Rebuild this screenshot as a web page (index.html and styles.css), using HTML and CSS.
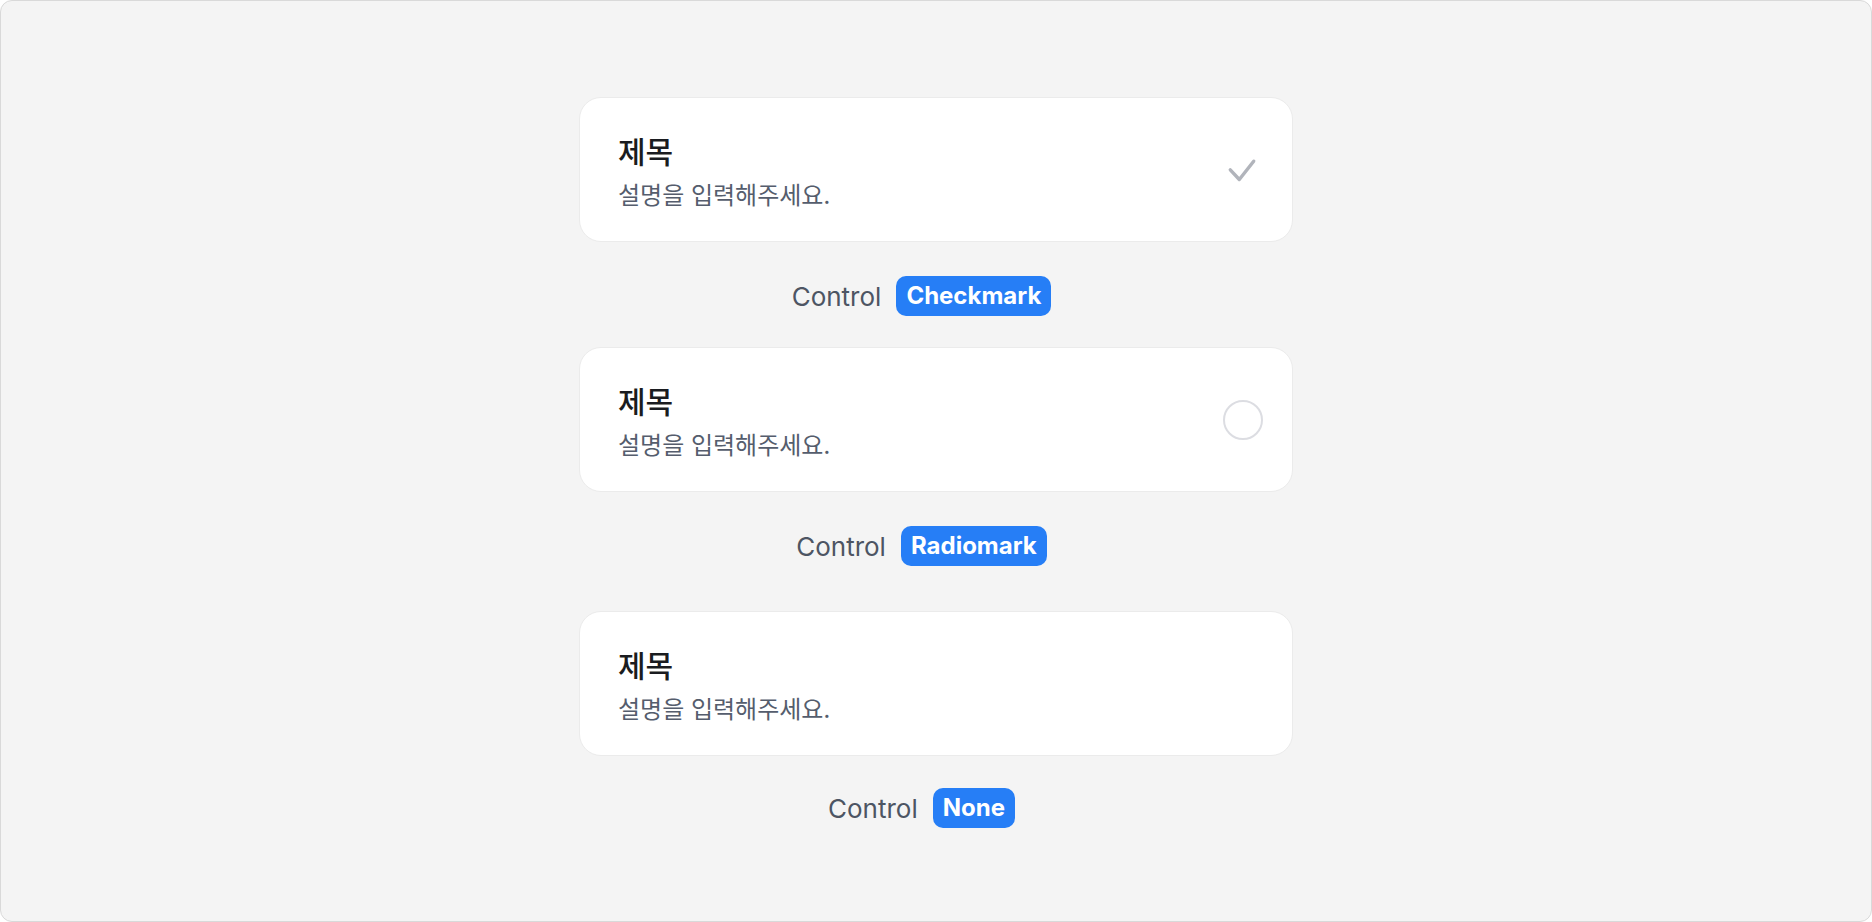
FILE: index.html
```html
<!DOCTYPE html>
<html lang="ko">
<head>
<meta charset="utf-8">
<title>List item controls</title>
<link rel="stylesheet" href="styles.css">
</head>
<body>
<div class="frame">
  <div class="stories">
    <section class="story">
      <div class="card">
        <div class="card-text">
          <div class="card-title">제목</div>
          <div class="card-desc">설명을 입력해주세요.</div>
        </div>
        <div class="control">
          <svg class="check" width="40" height="40" viewBox="0 0 40 40" aria-hidden="true">
            <path d="M7.3 19.8 L16.3 29.5 L30.7 11.2" fill="none" stroke="#b1b4bb" stroke-width="3.4" stroke-linecap="round" stroke-linejoin="round"/>
          </svg>
        </div>
      </div>
      <div class="label-row">
        <span class="label-text">Control</span>
        <span class="badge">Checkmark</span>
      </div>
    </section>

    <section class="story">
      <div class="card">
        <div class="card-text">
          <div class="card-title">제목</div>
          <div class="card-desc">설명을 입력해주세요.</div>
        </div>
        <div class="control">
          <span class="radio"></span>
        </div>
      </div>
      <div class="label-row">
        <span class="label-text">Control</span>
        <span class="badge">Radiomark</span>
      </div>
    </section>

    <section class="story story--spaced">
      <div class="card">
        <div class="card-text">
          <div class="card-title">제목</div>
          <div class="card-desc">설명을 입력해주세요.</div>
        </div>
      </div>
      <div class="label-row">
        <span class="label-text">Control</span>
        <span class="badge">None</span>
      </div>
    </section>
  </div>
</div>
</body>
</html>
```

FILE: styles.css
```css
* {
  box-sizing: border-box;
}

html, body {
  margin: 0;
  padding: 0;
  height: 100%;
}

body {
  font-family: Inter, "Noto Sans CJK KR", "Noto Sans", sans-serif;
  background: #ffffff;
}

.frame {
  width: 1872px;
  height: 922px;
  padding-top: 3px;
  background: #f4f4f4;
  border: 1px solid #d9d9d9;
  border-radius: 12px;
  display: flex;
  align-items: center;
  justify-content: center;
}

.stories {
  display: flex;
  flex-direction: column;
  align-items: center;
  gap: 31px;
}

.story {
  display: flex;
  flex-direction: column;
  align-items: center;
  gap: 34px;
}

.story--spaced {
  margin-top: 14px;
  gap: 32px;
}

.card {
  width: 714px;
  height: 145px;
  background: #ffffff;
  border: 1px solid #ebebeb;
  border-radius: 22px;
  padding: 0 29px 0 38px;
  display: flex;
  align-items: center;
  justify-content: space-between;
}

.card-text {
  display: flex;
  flex-direction: column;
  gap: 8px;
}

.card-title {
  font-family: "Noto Sans CJK KR", sans-serif;
  font-size: 30px;
  line-height: 40px;
  font-weight: 500;
  color: #1a1c20;
}

.card-desc {
  font-family: "Noto Sans CJK KR", sans-serif;
  font-size: 24px;
  line-height: 32px;
  font-weight: 400;
  color: #555d6d;
}

.control {
  width: 40px;
  height: 40px;
  display: flex;
  align-items: center;
  justify-content: center;
}

.check {
  display: block;
}

.radio {
  display: block;
  width: 40px;
  height: 40px;
  border-radius: 50%;
  border: 2px solid #dcdde2;
  background: #ffffff;
}

.label-row {
  display: flex;
  align-items: center;
  gap: 15px;
  height: 40px;
  padding-right: 29px;
}

.label-text {
  font-size: 26px;
  color: #4d5563;
}

.badge {
  height: 40px;
  line-height: 40px;
  padding: 0 10px;
  border-radius: 10px;
  background: #267ef6;
  color: #ffffff;
  font-size: 24px;
  font-weight: 700;
}
```
